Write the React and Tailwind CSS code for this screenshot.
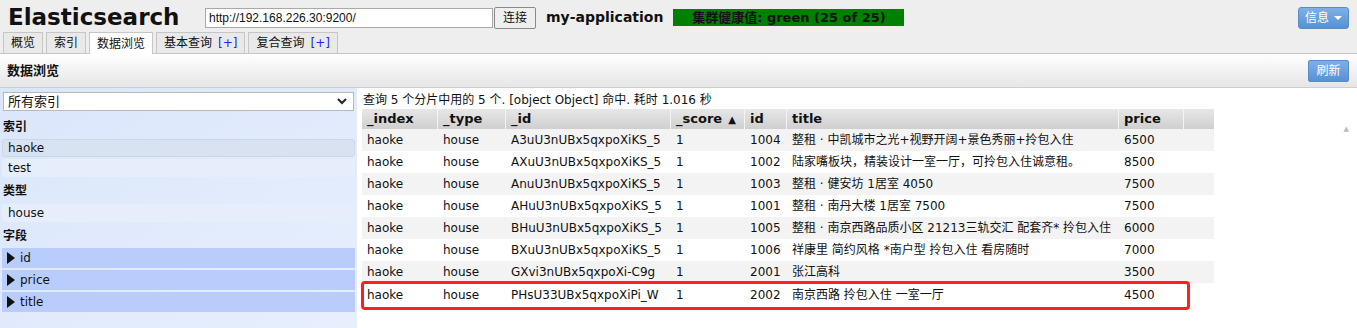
import React from 'react'

const rows = [
  ['haoke', 'house', 'A3uU3nUBx5qxpoXiKS_5', '1', '1004', '整租 · 中凯城市之光+视野开阔+景色秀丽+拎包入住', '6500'],
  ['haoke', 'house', 'AXuU3nUBx5qxpoXiKS_5', '1', '1002', '陆家嘴板块，精装设计一室一厅，可拎包入住诚意租。', '8500'],
  ['haoke', 'house', 'AnuU3nUBx5qxpoXiKS_5', '1', '1003', '整租 · 健安坊 1居室 4050', '7500'],
  ['haoke', 'house', 'AHuU3nUBx5qxpoXiKS_5', '1', '1001', '整租 · 南丹大楼 1居室 7500', '7500'],
  ['haoke', 'house', 'BHuU3nUBx5qxpoXiKS_5', '1', '1005', '整租 · 南京西路品质小区 21213三轨交汇 配套齐* 拎包入住', '6000'],
  ['haoke', 'house', 'BXuU3nUBx5qxpoXiKS_5', '1', '1006', '祥康里 简约风格 *南户型 拎包入住 看房随时', '7000'],
  ['haoke', 'house', 'GXvi3nUBx5qxpoXi-C9g', '1', '2001', '张江高科', '3500'],
]

const last = ['haoke', 'house', 'PHsU33UBx5qxpoXiPi_W', '1', '2002', '南京西路 拎包入住 一室一厅', '4500']

const cols = [
  { name: '_index', w: 'w-[76px]' },
  { name: '_type', w: 'w-[68px]' },
  { name: '_id', w: 'w-[165px]' },
  { name: '_score', w: 'w-[74px]', sort: true },
  { name: 'id', w: 'w-[42px]' },
  { name: 'title', w: 'w-[332px]' },
  { name: 'price', w: 'w-[65px]' },
]

function Tab({ label, plus, active }) {
  return (
    <div
      className={
        'h-[21px] px-[7px] border border-b-0 border-[#c6c6c6] flex items-center text-[12px] leading-none ' +
        (active ? 'bg-white h-[22px] -mb-px' : 'bg-[#e9e9e9]')
      }
    >
      {label}
      {plus ? <span className="ml-[6px] text-[#2222ff]">[+]</span> : null}
    </div>
  )
}

function Row({ cells, gray }) {
  return (
    <div className={'flex h-[22px] items-center text-[12px] ' + (gray ? 'bg-[#f3f3f3]' : 'bg-white')}>
      {cells.map((c, i) => (
        <div key={i} className={cols[i].w + ' shrink-0 pl-[5px] whitespace-nowrap overflow-hidden'}>
          {c}
        </div>
      ))}
    </div>
  )
}

export default function App() {
  return (
    <div
      className="w-[1357px] h-[328px] overflow-hidden bg-white text-[#111]"
      style={{ fontFamily: '"DejaVu Sans", Verdana, "Noto Sans CJK SC", sans-serif' }}
    >
      {/* top header */}
      <div className="h-[54px] bg-[#eeeeee] border-b border-[#c6c6c6] relative">
        <div className="flex items-center h-[33px] pt-[2px]">
          <div className="ml-[8px] w-[190px] text-[23px] font-bold leading-none">Elasticsearch</div>
          <input
            readOnly
            value="http://192.168.226.30:9200/"
            className="ml-[7px] w-[288px] h-[20px] bg-white border border-[#a9a9a9] px-[3px] text-[12px] outline-none"
            style={{ fontFamily: '"Liberation Sans", Arial, sans-serif' }}
          />
          <button className="ml-[1px] h-[22px] w-[42px] border border-[#8a8a8a] rounded-[2px] bg-[#efefef] text-[12px]">
            连接
          </button>
          <div className="ml-[10px] text-[14px] font-bold">my-application</div>
          <div className="ml-[10px] h-[17px] w-[231px] bg-[#008000] text-[13px] font-bold flex items-center justify-center leading-none">
            集群健康值: green (25 of 25)
          </div>
          <div className="ml-auto mr-[8px] h-[22px] w-[51px] rounded-[3px] border border-[#5b8ac7] bg-gradient-to-b from-[#7fb0e4] to-[#5592d4] text-white text-[12px] flex items-center justify-center gap-[5px]">
            信息
            <span className="w-0 h-0 border-l-[4px] border-r-[4px] border-t-[4px] border-l-transparent border-r-transparent border-t-white" />
          </div>
        </div>
        <div className="absolute left-[3px] bottom-0 flex gap-[3px]">
          <Tab label="概览" />
          <Tab label="索引" />
          <Tab label="数据浏览" active />
          <Tab label="基本查询" plus />
          <Tab label="复合查询" plus />
        </div>
      </div>

      {/* page bar */}
      <div className="h-[34px] bg-gradient-to-b from-white to-[#e6e6e6] border-b border-[#cfcfcf] flex items-center">
        <div className="ml-[7px] text-[13px] font-bold">数据浏览</div>
        <div className="ml-auto mr-[8px] h-[22px] w-[41px] rounded-[2px] border border-[#5b8ac7] bg-gradient-to-b from-[#7fb0e4] to-[#5592d4] text-white text-[12px] flex items-center justify-center">
          刷新
        </div>
      </div>

      <div className="flex h-[240px]">
        {/* left filter panel */}
        <div className="w-[357px] shrink-0 bg-gradient-to-br from-[#dae6fb] to-[#e7effd] px-[2px] pt-[4px] text-[12px]">
          <div className="h-[19px] mx-[1px] bg-white border border-[#b9b9b9] flex items-center pl-[4px] pr-[6px] text-[13px]">
            <span>所有索引</span>
            <svg className="ml-auto" width="10" height="7" viewBox="0 0 10 7">
              <path d="M1 1l4 4 4-4" fill="none" stroke="#222" strokeWidth="2" />
            </svg>
          </div>
          <div className="mt-[7px] font-bold h-[18px] leading-[18px] pl-[1px]">索引</div>
          <div className="mt-[3px] h-[18px] rounded-[3px] bg-[#d9e2f1] border border-[#cbd6e8] pl-[5px] flex items-center">haoke</div>
          <div className="mt-[2px] h-[18px] rounded-[3px] bg-[#e6eefc] pl-[6px] flex items-center">test</div>
          <div className="mt-[5px] font-bold h-[18px] leading-[18px] pl-[1px]">类型</div>
          <div className="mt-[4px] h-[18px] rounded-[3px] bg-[#e6eefc] pl-[6px] flex items-center">house</div>
          <div className="mt-[5px] font-bold h-[18px] leading-[18px] pl-[1px]">字段</div>
          {['id', 'price', 'title'].map((f, i) => (
            <div key={f} className={(i === 0 ? 'mt-[3px]' : 'mt-[2px]') + ' h-[20px] bg-[#b8cdfc] flex items-center pl-[5px] text-[12px]'}>
              <span className="w-0 h-0 border-t-[6px] border-b-[6px] border-l-[8px] border-t-transparent border-b-transparent border-l-[#111] mr-[5px]" />
              {f}
            </div>
          ))}
        </div>

        {/* results */}
        <div className="flex-1 pl-[5px] pt-[3px] relative">
          <div className="text-[12px] h-[18px] leading-[18px] pl-[1px]">
            查询 5 个分片中用的 5 个. [object Object] 命中. 耗时 1.016 秒
          </div>
          <div className="w-[852px]">
            <div className="flex h-[20px] items-center text-[13px] font-bold">
              {cols.map((c) => (
                <div
                  key={c.name}
                  className={c.w + ' shrink-0 h-full pl-[5px] flex items-center bg-gradient-to-b from-[#e7e7e7] to-[#cfcfcf] border-r border-[#f4f4f4]'}
                >
                  {c.name}
                  {c.sort ? <span className="ml-auto mr-[8px] text-[10px]">▲</span> : null}
                </div>
              ))}
              <div className="w-[30px] shrink-0 h-full bg-gradient-to-b from-[#e7e7e7] to-[#cfcfcf]" />
            </div>
            {rows.map((r, i) => (
              <Row key={i} cells={r} gray={i % 2 === 0} />
            ))}
            <div className="relative w-[829px] -ml-[1px] mt-[-2px] border-[3px] border-[#ff1f1f] rounded-[4px] h-[29px] flex items-center">
              <div className="flex text-[12px] -ml-[2px] -mt-[2px]">
                {last.map((c, i) => (
                  <div key={i} className={cols[i].w + ' shrink-0 pl-[5px] whitespace-nowrap'}>
                    {c}
                  </div>
                ))}
              </div>
            </div>
          </div>
          <span className="absolute right-[8px] top-[36px] text-[7px] text-[#bbb]">▲</span>
        </div>
      </div>
    </div>
  )
}
